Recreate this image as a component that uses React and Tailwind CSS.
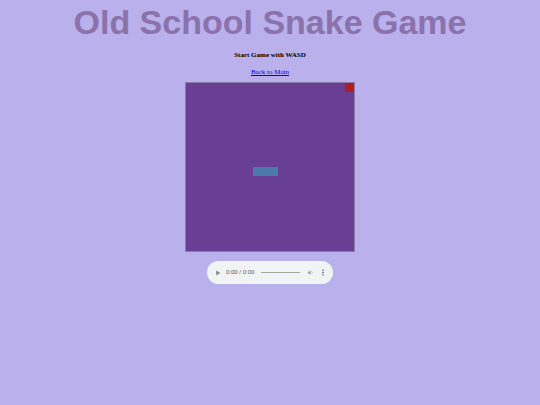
export default function App() {
  return (
    <div className="min-h-[405px] w-full bg-[#b9b0ec] flex flex-col items-center font-['Liberation_Serif',serif]">
      {/* ===== Title ===== */}
      <h1 className="mt-[2px] text-[34px] leading-[40px] font-bold text-[#8b72ab] font-['Liberation_Sans',Arial,sans-serif]">
        Old School Snake Game
      </h1>
      <p className="mt-[9px] text-[7px] leading-[8px] font-bold text-black">
        Start Game with WASD
      </p>
      <a href="#" className="mt-[9px] text-[7px] leading-[8px] text-[#0000ee] underline">
        Back to Main
      </a>

      {/* ===== Board ===== */}
      <div className="mt-[6px] w-[170px] h-[170px] border border-[#8a7ca6] bg-[#693e95] relative">
        <div className="absolute right-0 top-0 w-[9px] h-[9px] bg-[#b21c1f]" />
        <div className="absolute left-[67px] top-[84px] w-[25px] h-[9px] bg-[#4b79a9]" />
      </div>

      {/* ===== Audio ===== */}
      <div className="mt-[9px] w-[126px] h-[23px] rounded-full bg-[#f1f3f4] flex items-center px-[8px] gap-[5px] font-['Liberation_Sans',Arial,sans-serif]">
        <svg width="6" height="6" viewBox="0 0 10 10">
          <path d="M2 1 L9 5 L2 9 Z" fill="#8a8a8a" />
        </svg>
        <span className="text-[6px] text-[#555] whitespace-nowrap">0:00 / 0:00</span>
        <div className="flex-1 h-[1px] bg-[#a8a8a8] mx-[2px]" />
        <svg width="7" height="7" viewBox="0 0 24 24">
          <path d="M3 9v6h4l5 5V4L7 9H3z" fill="#9a9a9a" />
          <path d="M16 8a5 5 0 0 1 0 8" stroke="#9a9a9a" strokeWidth="2" fill="none" />
        </svg>
        <svg width="4" height="7" viewBox="0 0 4 12" className="ml-[2px]">
          <circle cx="2" cy="2" r="1.2" fill="#333" />
          <circle cx="2" cy="6" r="1.2" fill="#333" />
          <circle cx="2" cy="10" r="1.2" fill="#333" />
        </svg>
      </div>
    </div>
  );
}
